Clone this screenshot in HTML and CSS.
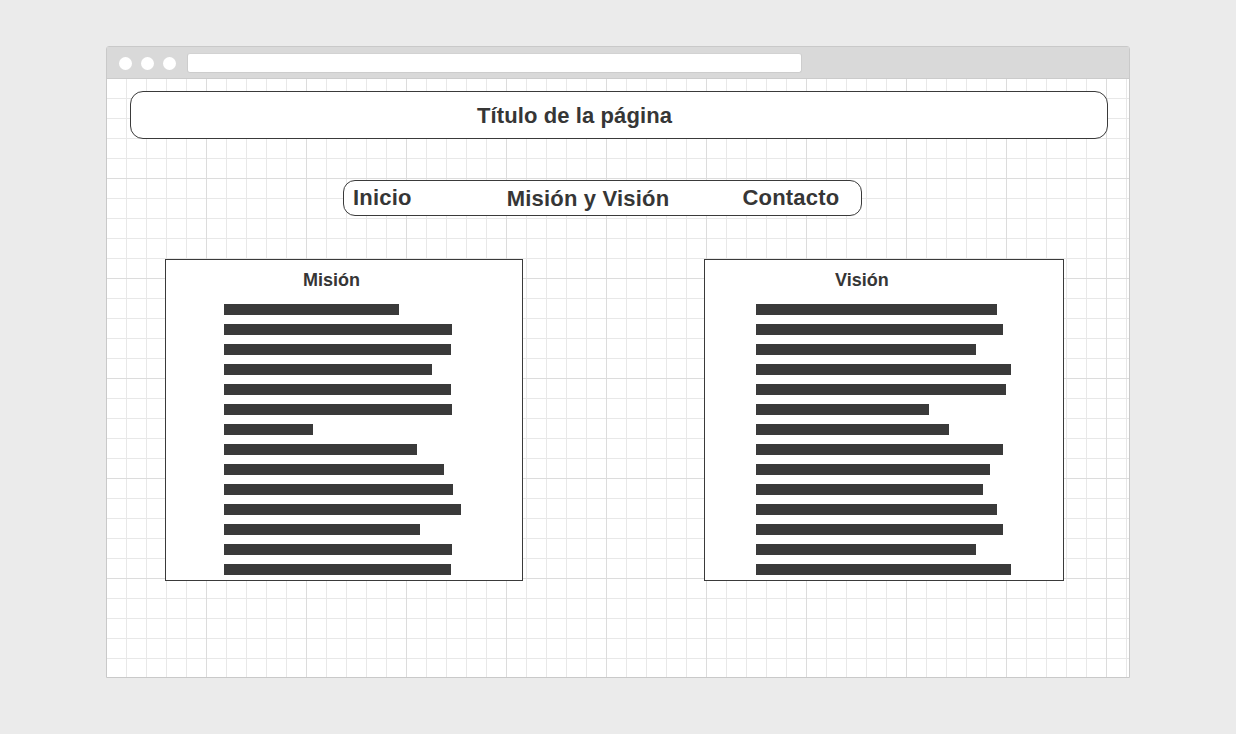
FILE: index.html
```html
<!DOCTYPE html>
<html lang="es">
<head>
<meta charset="utf-8">
<title>Wireframe</title>
<link rel="stylesheet" href="styles.css">
</head>
<body>
<div class="window">
  <div class="chrome">
    <span class="dot"></span><span class="dot"></span><span class="dot"></span>
    <div class="address"></div>
  </div>
  <div class="canvas">
    <header class="title-box">Título de la página</header>
    <nav class="nav">
      <span class="nav-item nav-inicio">Inicio</span>
      <span class="nav-item nav-mision">Misión y Visión</span>
      <span class="nav-item nav-contacto">Contacto</span>
    </nav>
    <div class="cards">
      <section class="card card-mision">
        <h2 class="card-title">Misión</h2>
        <div class="lines">
          <div class="bar" style="width:175px"></div>
          <div class="bar" style="width:228px"></div>
          <div class="bar" style="width:227px"></div>
          <div class="bar" style="width:208px"></div>
          <div class="bar" style="width:227px"></div>
          <div class="bar" style="width:228px"></div>
          <div class="bar" style="width:89px"></div>
          <div class="bar" style="width:193px"></div>
          <div class="bar" style="width:220px"></div>
          <div class="bar" style="width:229px"></div>
          <div class="bar" style="width:237px"></div>
          <div class="bar" style="width:196px"></div>
          <div class="bar" style="width:228px"></div>
          <div class="bar" style="width:227px"></div>
        </div>
      </section>
      <section class="card card-vision">
        <h2 class="card-title">Visión</h2>
        <div class="lines">
          <div class="bar" style="width:241px"></div>
          <div class="bar" style="width:247px"></div>
          <div class="bar" style="width:220px"></div>
          <div class="bar" style="width:255px"></div>
          <div class="bar" style="width:250px"></div>
          <div class="bar" style="width:173px"></div>
          <div class="bar" style="width:193px"></div>
          <div class="bar" style="width:247px"></div>
          <div class="bar" style="width:234px"></div>
          <div class="bar" style="width:227px"></div>
          <div class="bar" style="width:241px"></div>
          <div class="bar" style="width:247px"></div>
          <div class="bar" style="width:220px"></div>
          <div class="bar" style="width:255px"></div>
        </div>
      </section>
    </div>
  </div>
</div>
</body>
</html>
```

FILE: styles.css
```css
* {
  box-sizing: border-box;
}

html, body {
  margin: 0;
  padding: 0;
  background: #ebebeb;
}

body {
  font-family: "Liberation Sans", Arial, sans-serif;
  color: #363636;
  padding: 46px 0 0 106px;
  height: 734px;
}

.window {
  width: 1024px;
  height: 632px;
  border: 1px solid #c9c9c9;
  border-radius: 3px 3px 0 0;
  display: flex;
  flex-direction: column;
  background: #ffffff;
}

.chrome {
  height: 32px;
  background: #d9d9d9;
  border-bottom: 1px solid #cbcbcb;
  display: flex;
  align-items: center;
  padding-left: 12px;
  padding-top: 1px;
  gap: 9px;
  flex-shrink: 0;
}

.dot {
  width: 13px;
  height: 13px;
  border-radius: 50%;
  background: #ffffff;
  flex-shrink: 0;
}

.address {
  margin-left: 2px;
  width: 615px;
  height: 20px;
  background: #ffffff;
  border-radius: 3px;
  border: 1px solid #cdcdcd;
  border-top-color: #d2d2d2;
}

.canvas {
  flex: 1;
  background-color: #ffffff;
  background-image:
    linear-gradient(to right, transparent 99px, #dcdcdc 99px),
    linear-gradient(to bottom, transparent 99px, #dcdcdc 99px),
    linear-gradient(to right, transparent 19px, #e8e8e8 19px),
    linear-gradient(to bottom, transparent 19px, #e8e8e8 19px);
  background-size: 100px 100px, 100px 100px, 20px 20px, 20px 20px;
  display: flex;
  flex-direction: column;
  align-items: flex-start;
  padding-top: 12px;
}

.title-box {
  margin-left: 23px;
  width: 978px;
  height: 48px;
  border: 1px solid #3a3a3a;
  border-radius: 13px;
  background: #ffffff;
  display: flex;
  align-items: center;
  justify-content: center;
  padding-right: 89px;
  font-size: 22px;
  line-height: 25px;
  font-weight: bold;
  letter-spacing: 0.1px;
}

.nav {
  margin-top: 41px;
  margin-left: 236px;
  width: 519px;
  height: 36px;
  border: 1px solid #3a3a3a;
  border-radius: 12px;
  background: #ffffff;
  display: flex;
  align-items: center;
  padding-left: 9px;
  font-size: 22px;
  line-height: 25px;
  font-weight: bold;
  letter-spacing: 0.2px;
}

.nav-inicio,
.nav-contacto {
  position: relative;
  top: -1px;
}

.nav-mision {
  margin-left: 95px;
}

.nav-contacto {
  margin-left: 73px;
}

.cards {
  margin-top: 43px;
  margin-left: 58px;
  display: flex;
  align-items: flex-start;
  gap: 181px;
}

.card {
  border: 1px solid #3a3a3a;
  background: #ffffff;
  padding-top: 10px;
  padding-bottom: 5px;
}

.card-mision {
  width: 358px;
}

.card-vision {
  width: 360px;
}

.card-title {
  margin: 0;
  font-size: 18px;
  line-height: 21px;
  font-weight: bold;
  text-align: left;
}

.card-mision .card-title {
  padding-left: 137px;
}

.card-vision .card-title {
  padding-left: 130px;
}

.lines {
  margin-top: 13px;
  display: flex;
  flex-direction: column;
  gap: 9px;
}

.card-mision .lines {
  padding-left: 58px;
}

.card-vision .lines {
  padding-left: 51px;
}

.bar {
  height: 11px;
  background: #3a3a3a;
}
```
